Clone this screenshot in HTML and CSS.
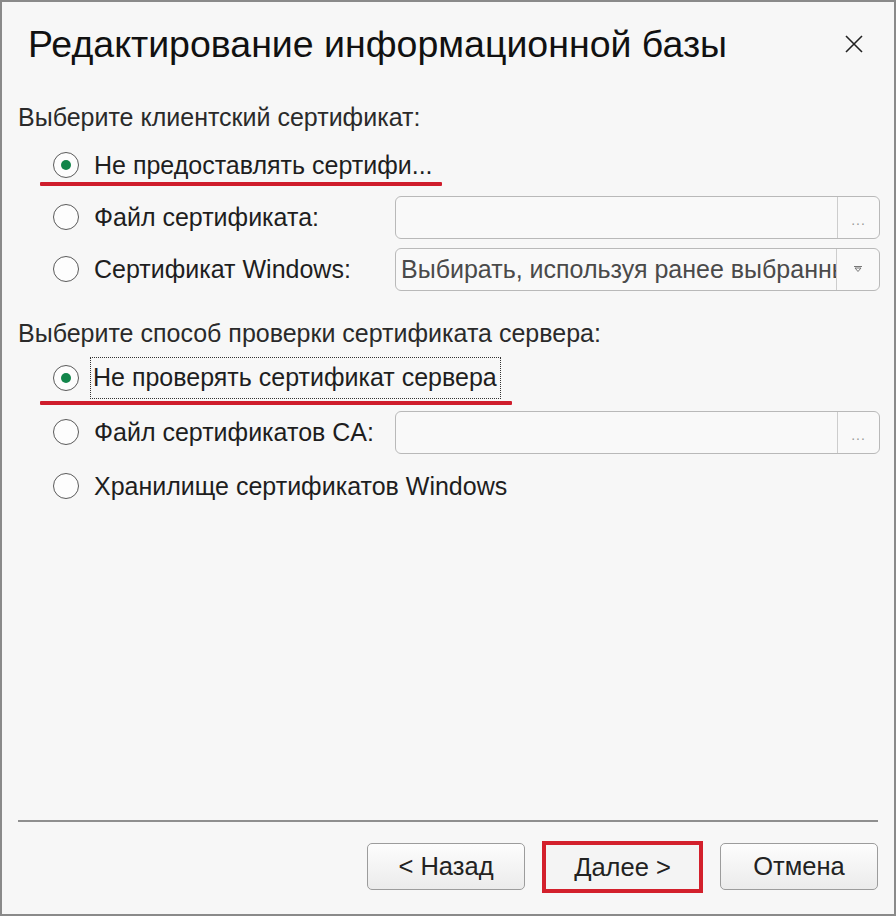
FILE: index.html
```html
<!DOCTYPE html>
<html lang="ru">
<head>
  <meta charset="UTF-8" />
  <meta name="viewport" content="width=device-width, initial-scale=1.0" />
  <title>Редактирование информационной базы</title>
  <link rel="stylesheet" href="styles.css">
</head>
<body>
  <div class="dialog">
    <div class="title-bar">
      <h1>Редактирование информационной базы</h1>
      <button class="close-btn" title="Закрыть">
        <svg width="20" height="20" viewBox="0 0 20 20"><path d="M2 2 L18 18 M18 2 L2 18" stroke="#222" stroke-width="1.6" fill="none"/></svg>
      </button>
    </div>

    <div class="content">
      <div class="section-label">Выберите клиентский сертификат:</div>
      <div class="options">
        <div class="row mark-first">
          <label class="radio checked"><span class="circle"></span><span class="text">Не предоставлять сертифи...</span></label>
        </div>
        <div class="row">
          <label class="radio"><span class="circle"></span><span class="text">Файл сертификата:</span></label>
          <div class="field"><div class="field-value"></div><div class="field-btn dots">...</div></div>
        </div>
        <div class="row">
          <label class="radio"><span class="circle"></span><span class="text">Сертификат Windows:</span></label>
          <div class="field"><div class="field-value">Выбирать, используя ранее выбранный</div><div class="field-btn">
            <svg width="10" height="8" viewBox="0 0 10 8"><path d="M1 1.5 H9 M2 3 L5 6.5 L8 3 Z" stroke="#777" stroke-width="1" fill="none"/></svg>
          </div></div>
        </div>
      </div>

      <div class="section-label second">Выберите способ проверки сертификата сервера:</div>
      <div class="options wide">
        <div class="row mark-second">
          <label class="radio checked"><span class="circle"></span><span class="text focused">Не проверять сертификат сервера</span></label>
        </div>
        <div class="row">
          <label class="radio"><span class="circle"></span><span class="text">Файл сертификатов CA:</span></label>
          <div class="field"><div class="field-value"></div><div class="field-btn dots">...</div></div>
        </div>
        <div class="row">
          <label class="radio"><span class="circle"></span><span class="text">Хранилище сертификатов Windows</span></label>
        </div>
      </div>
    </div>

    <div class="separator"></div>

    <div class="footer">
      <button class="btn">&lt; Назад</button>
      <button class="btn btn-marked">Далее &gt;</button>
      <button class="btn">Отмена</button>
    </div>
  </div>
</body>
</html>
```

FILE: styles.css
```css
body {
  margin: 0;
  padding: 0;
  font-family: 'Liberation Sans', Arial, sans-serif;
  background: #f7f7f7;
}
.dialog {
  width: 896px;
  height: 916px;
  box-sizing: border-box;
  border: 2px solid #8a8a8a;
  background: #f7f7f7;
  display: flex;
  flex-direction: column;
  color: #222;
}
.title-bar {
  height: 84px;
  display: flex;
  align-items: center;
  justify-content: space-between;
  padding: 0 30px 0 26px;
  flex-shrink: 0;
}
.title-bar h1 {
  margin: 0;
  font-size: 37.5px;
  font-weight: normal;
  color: #111;
}
.close-btn {
  background: none;
  border: none;
  padding: 0;
  width: 20px;
  height: 20px;
  cursor: pointer;
}
.content {
  flex: 1;
  padding: 0 14px 0 16px;
}
.section-label {
  margin-top: 16px;
  height: 30px;
  line-height: 30px;
  font-size: 25px;
  color: #2a2a2a;
}
.section-label.second {
  margin-top: 23px;
}
.options {
  margin-top: 7px;
}
.options.wide {
  margin-top: 3px;
}
.row {
  position: relative;
  height: 52px;
  display: grid;
  grid-template-columns: 377px 1fr;
  align-items: center;
}
.options.wide .row {
  height: 54px;
}
.mark-first::after,
.mark-second::after {
  content: "";
  position: absolute;
  left: 22px;
  height: 4px;
  background: #cf1d2c;
  border-radius: 1px;
}
.mark-first::after {
  top: 43px;
  width: 402px;
}
.mark-second::after {
  top: 50px;
  width: 472px;
}
.radio {
  display: flex;
  align-items: center;
  padding-left: 35px;
  white-space: nowrap;
}
.circle {
  width: 26px;
  height: 26px;
  box-sizing: border-box;
  border: 1.5px solid #5a5a5a;
  border-radius: 50%;
  background: #fdfdfd;
  display: flex;
  align-items: center;
  justify-content: center;
  flex-shrink: 0;
}
.radio.checked .circle::before {
  content: "";
  width: 10px;
  height: 10px;
  border-radius: 50%;
  background: #12854a;
}
.text {
  margin-left: 15px;
  font-size: 25px;
  line-height: 29px;
  color: #1e1e1e;
}
.text.focused {
  margin-left: 12px;
  padding: 5px 3px 6px 2px;
  outline: 1.5px dotted #333;
}
.field {
  height: 43px;
  box-sizing: border-box;
  border: 1px solid #b9b9b9;
  border-radius: 6px;
  background: #f9f9f9;
  display: flex;
  overflow: hidden;
}
.field-value {
  flex: 1;
  padding-left: 5px;
  font-size: 25px;
  line-height: 41px;
  color: #4a4a4a;
  white-space: nowrap;
  overflow: hidden;
}
.field-btn {
  width: 42px;
  border-left: 1px solid #cdcdcd;
  display: flex;
  align-items: center;
  justify-content: center;
  color: #9a9a9a;
  font-size: 14px;
  letter-spacing: 1px;
}
.field-btn.dots {
  padding-top: 6px;
  box-sizing: border-box;
}
.separator {
  height: 2px;
  margin: 0 16px;
  background: #8f8f8f;
  flex-shrink: 0;
}
.footer {
  height: 92px;
  flex-shrink: 0;
  display: flex;
  justify-content: flex-end;
  align-items: flex-start;
  gap: 17px;
  padding: 21px 16px 0 0;
  box-sizing: border-box;
}
.btn {
  width: 158px;
  height: 47px;
  font-family: 'Liberation Sans', Arial, sans-serif;
  font-size: 25.5px;
  color: #222;
  border: 1px solid #9c9c9c;
  border-radius: 5px;
  background: linear-gradient(#fdfdfd, #ebebeb);
  cursor: pointer;
}
.btn-marked {
  width: 161px;
  height: 52px;
  margin-top: -2px;
  border: 4px solid #d3202c;
  border-radius: 0;
  background: #f4f4f4;
}
```
